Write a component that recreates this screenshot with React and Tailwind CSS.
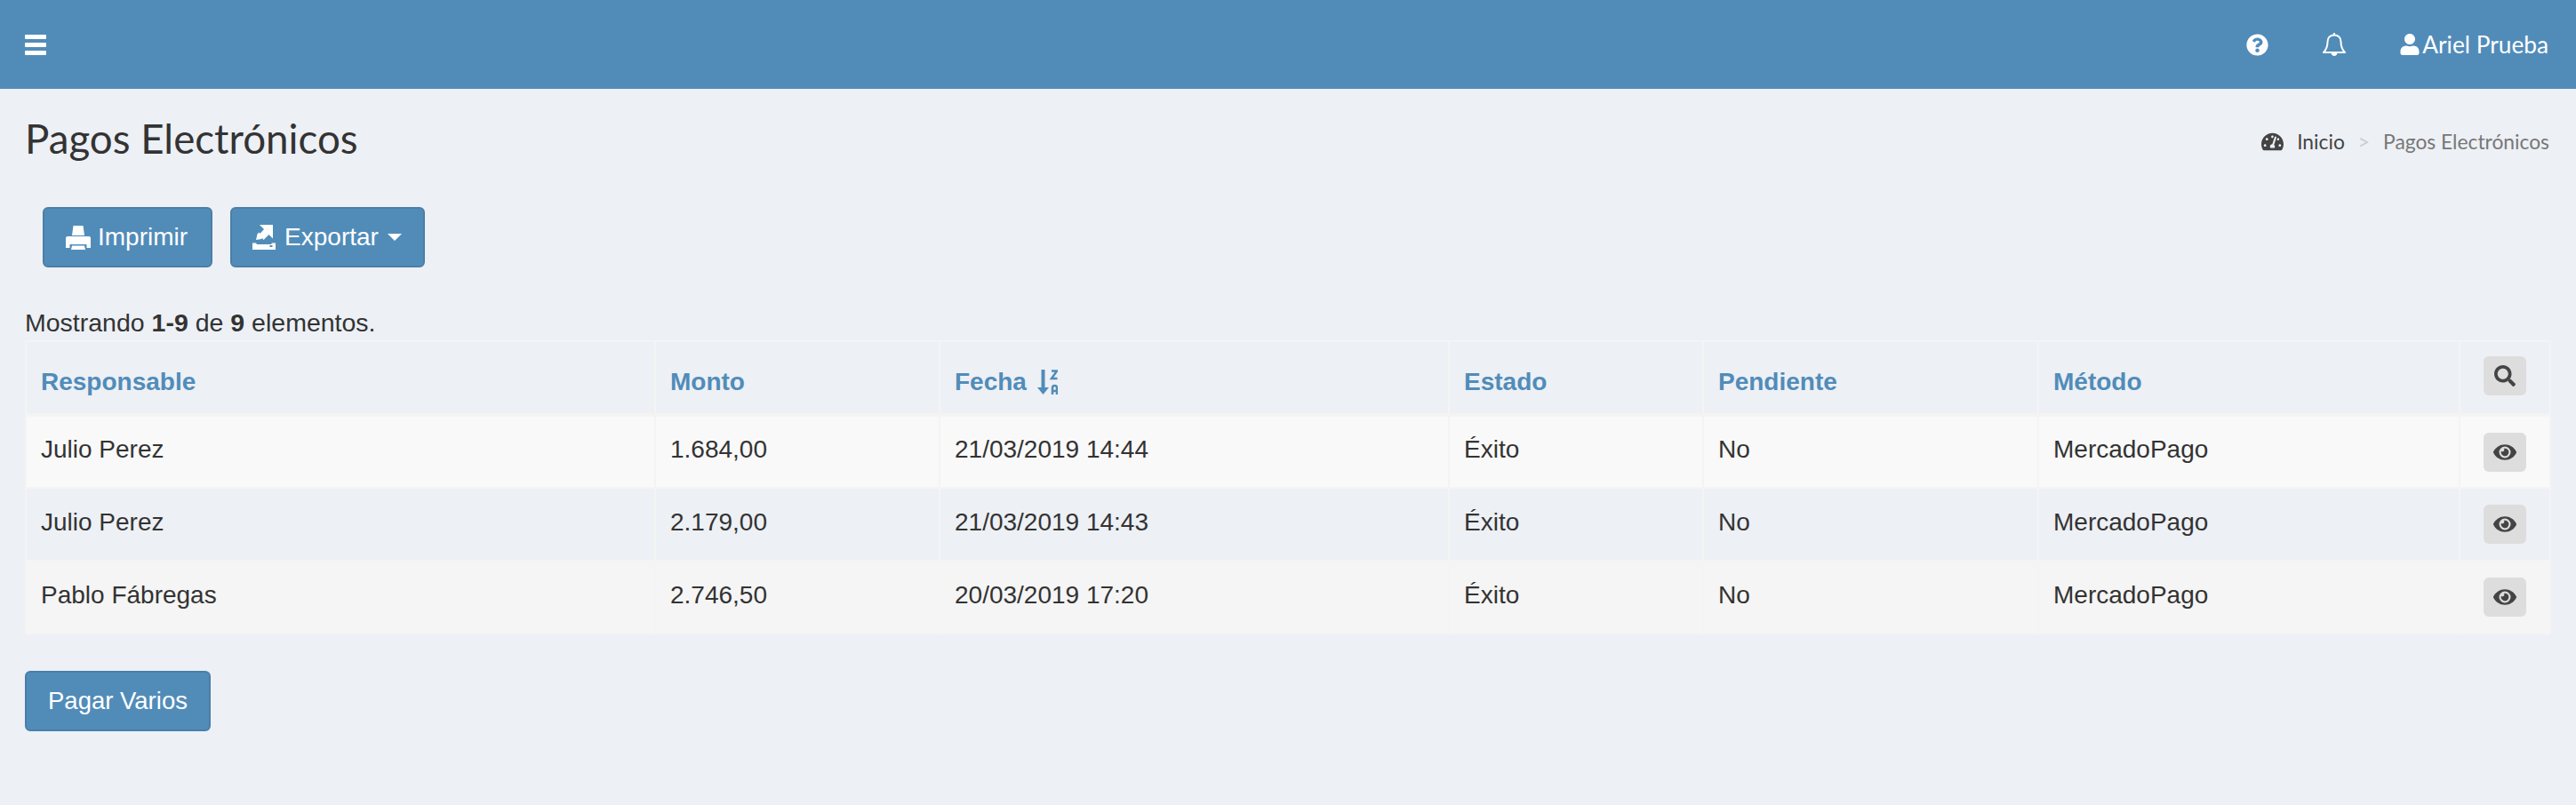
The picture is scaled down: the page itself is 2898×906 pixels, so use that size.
import React from "react";
import { FaQuestionCircle, FaUser, FaTachometerAlt, FaSearch, FaEye } from "react-icons/fa";

const src = "font-['Lato','Noto_Sans',sans-serif]";
const helv = "font-['Liberation_Sans',Arial,sans-serif]";

const BarsIcon = () => (
  <svg viewBox="0 0 24 23" className="w-[24px] h-[23px]" fill="#fff">
    <rect x="0" y="0" width="24" height="5" rx="1" />
    <rect x="0" y="9" width="24" height="5" rx="1" />
    <rect x="0" y="18" width="24" height="5" rx="1" />
  </svg>
);

const BellIcon = () => (
  <svg viewBox="0 0 26 28" className="w-[26px] h-[28px]" fill="none" stroke="#fff" strokeWidth="2" strokeLinejoin="round">
    <path d="M13 3.500c-4.500 0-7.500 3-7.500 7.500 0 6-1.500 9-4.500 12h24c-3-3-4.500-6-4.500-12 0-4.500-3-7.500-7.500-7.500z" />
    <path d="M13 1v2.500" />
    <path d="M10 23.500a3 3 0 0 0 6 0" fill="#fff" strokeWidth="1" />
  </svg>
);

const PrintIcon = () => (
  <svg viewBox="0 0 28 27" className="w-[28px] h-[27px]" fill="#fff">
    <path d="M8.500 0h11l1.500 11h-14z" />
    <path d="M2 12h24q2 0 2 2v11h-4.500v-4h-19v4h-4.500v-11q0-2 2-2z" />
    <path d="M7 22.500h14l1 4.500h-16z" />
  </svg>
);

const ExportIcon = () => (
  <svg viewBox="0 0 26 28" className="w-[26px] h-[28px]" fill="#fff">
    <path d="M8 0h15v15.500l-4.500-4.500-6 6-4.500-6.500 5-5.500z" />
    <path d="M5.500 10.500l2-2 4.500 5.500-2 2-6 1z" />
    <path d="M0 20.500h4l1 1.500h16l1-1.500h4v7.500h-26z" />
    <rect x="19.500" y="23" width="3" height="2" fill="#518cb9" />
  </svg>
);

const SortIcon = () => (
  <svg viewBox="0 0 23 28" className="w-[23px] h-[28px]" fill="none" stroke="#518cb9">
    <path d="M4.500 0h4v20h4.500l-6.500 8-6.500-8h4.500z" fill="#518cb9" stroke="none" />
    <path d="M16 1.500h6l-6 8.500h6.500" strokeWidth="2.500" />
    <path d="M17 28v-7.500q0-2.500 2.500-2.500t2.500 2.500v7.500M17 24h5" strokeWidth="2.500" />
  </svg>
);

const Btn = ({ children, className = "" }) => (
  <button className={`h-[68px] flex items-center rounded-[6px] border-2 border-[#4a7fa8] bg-[#518cb9] text-white ${helv} ${className}`}>
    {children}
  </button>
);

const rows = [
  ["Julio Perez", "1.684,00", "21/03/2019 14:44", "bg-[#f9f9f9]"],
  ["Julio Perez", "2.179,00", "21/03/2019 14:43", "bg-[#edf0f5]"],
  ["Pablo Fábregas", "2.746,50", "20/03/2019 17:20", "bg-[#f5f5f5]"],
];
const th = "border-2 border-b-4 border-[#f4f4f4] px-[16px] text-left font-bold text-[#518cb9] align-middle pt-[9px]";
const td = "border-2 border-[#f4f4f4] px-[16px] text-left font-normal align-middle pb-[5px]";

const IconBtn = ({ children }) => (
  <div className="mx-auto w-[48px] h-[44px] rounded-[6px] bg-[#dddddd] text-[#444444] flex items-center justify-center">
    {children}
  </div>
);

export default function App() {
  return (
    <div className={`min-h-[906px] bg-[#edf0f5] text-[#333333] ${helv}`}>
      <header className="h-[100px] bg-[#518cb9] flex items-center pl-[28px] pr-[31px] text-white">
        <BarsIcon />
        <div className={`ml-auto flex items-center ${src}`}>
          <FaQuestionCircle className="text-[25px] mr-[61px]" />
          <BellIcon />
          <FaUser className="text-[24px] ml-[60px] mr-[2px]" />
          <span className="text-[26.250px] leading-none">Ariel Prueba</span>
        </div>
      </header>

      <main className="px-[28px] pt-[26px]">
        <div className={`flex items-center justify-between h-[60px] ${src}`}>
          <h1 className="text-[45.700px] leading-none font-normal text-[#333333]">Pagos Electrónicos</h1>
          <div className="flex items-center text-[22.800px] pr-[2px] pt-[6px]">
            <FaTachometerAlt className="text-[25px] text-[#444444] mr-[15px]" />
            <span className="text-[#444444]">Inicio</span>
            <span className="text-[#cccccc] mx-[15px]">&gt;</span>
            <span className="text-[#777777]">Pagos Electrónicos</span>
          </div>
        </div>

        <div className="flex gap-[20px] pl-[20px] mt-[47px]">
          <Btn className="text-[28px] pl-[24px] pr-[26px] gap-[8px]"><PrintIcon /><span>Imprimir</span></Btn>
          <Btn className="text-[28px] pl-[23px] pr-[24px] gap-[10px]">
            <ExportIcon /><span>Exportar</span>
            <span className="border-x-[8px] border-t-[8px] border-x-transparent border-t-white" />
          </Btn>
        </div>

        <p className="mt-[43px] text-[28.500px] leading-[38px]">
          Mostrando <b>1-9</b> de <b>9</b> elementos.
        </p>

        <table className="mt-[1px] w-full table-fixed border-collapse text-[28px]">
          <colgroup>
            <col className="w-[708px]" />
            <col className="w-[320px]" />
            <col className="w-[573px]" />
            <col className="w-[286px]" />
            <col className="w-[377px]" />
            <col className="w-[474px]" />
            <col />
          </colgroup>
          <thead>
            <tr className="h-[83px]">
              <th className={th}>Responsable</th>
              <th className={th}>Monto</th>
              <th className={th}>
                <span className="inline-flex items-center gap-[12px]">Fecha <SortIcon /></span>
              </th>
              <th className={th}>Estado</th>
              <th className={th}>Pendiente</th>
              <th className={th}>Método</th>
              <th className="border-2 border-b-4 border-[#f4f4f4] pb-[4px]"><IconBtn><FaSearch className="text-[24px]" /></IconBtn></th>
            </tr>
          </thead>
          <tbody>
            {rows.map((r, i) => (
              <tr key={i} className={`h-[82px] ${r[3]}`}>
                <td className={td}>{r[0]}</td>
                <td className={td}>{r[1]}</td>
                <td className={td}>{r[2]}</td>
                <td className={td}>Éxito</td>
                <td className={td}>No</td>
                <td className={td}>MercadoPago</td>
                <td className="border-2 border-[#f4f4f4]"><IconBtn><FaEye className="text-[26px]" /></IconBtn></td>
              </tr>
            ))}
          </tbody>
        </table>

        <Btn className="text-[27.500px] mt-[41px] px-[24px]">Pagar Varios</Btn>
      </main>
    </div>
  );
}
